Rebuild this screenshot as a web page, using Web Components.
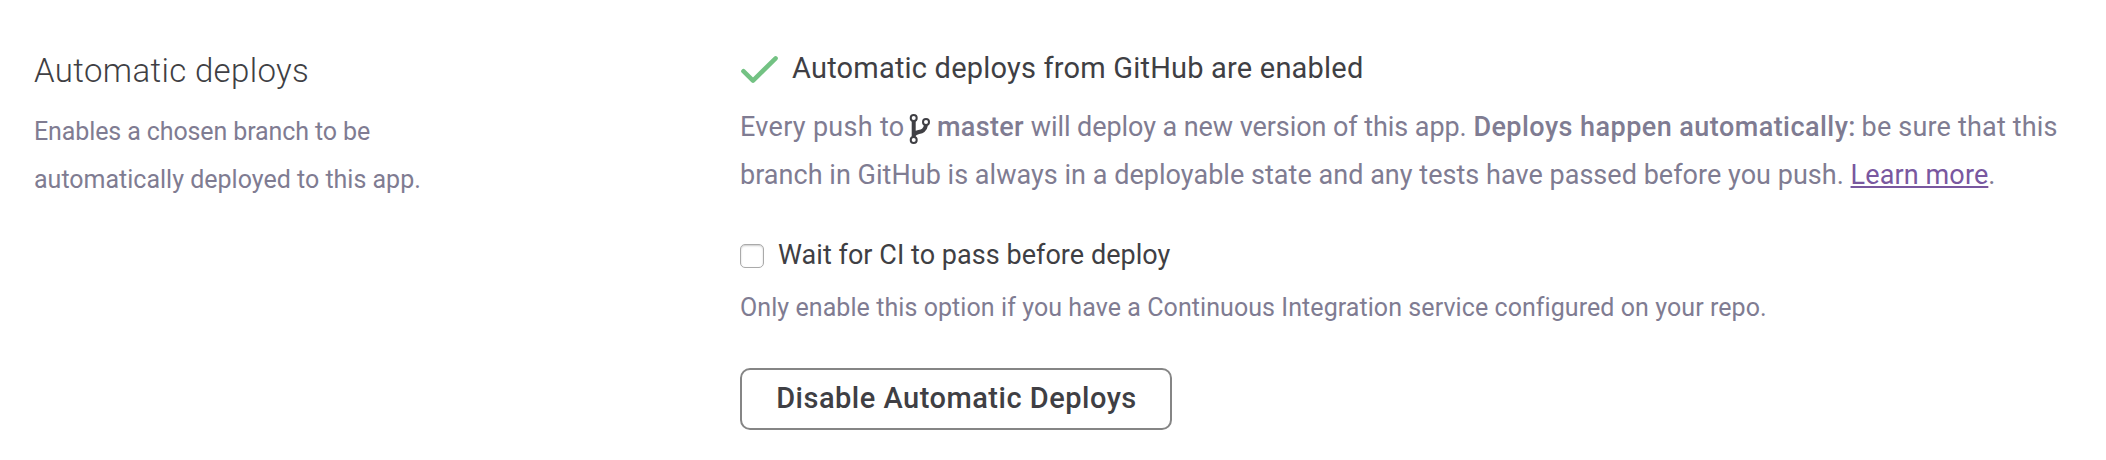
<!DOCTYPE html>
<html lang="en">
<head>
<meta charset="utf-8">
<title>Automatic deploys</title>
<style>
  body {
    margin: 0;
    background: #fff;
    color: #3f3f44;
    font-family: Roboto, "Liberation Sans", sans-serif;
  }
</style>
</head>
<body>
<deploy-section>
  <section-intro slot="intro" heading="Automatic deploys">Enables a chosen branch to be<br>automatically deployed to this app.</section-intro>
  <deploy-status heading="Automatic deploys from GitHub are enabled"></deploy-status>
  <ci-option label="Wait for CI to pass before deploy">Only enable this option if you have a Continuous Integration service configured on your repo.</ci-option>
  <outline-button>Disable Automatic Deploys</outline-button>
</deploy-section>

<script>
function define(name, html, setup) {
  const template = document.createElement('template');
  template.innerHTML = html;
  customElements.define(name, class extends HTMLElement {
    constructor() {
      super();
      this.attachShadow({ mode: 'open' });
      this.shadowRoot.appendChild(template.content.cloneNode(true));
      if (setup) setup(this, this.shadowRoot);
    }
  });
}

define('deploy-section', `
  <style>
    :host {
      display: grid;
      grid-template-columns: 706px 1fr;
      box-sizing: border-box;
      height: 460px;
      padding: 43px 34px 0;
    }
    main {
      display: flex;
      flex-direction: column;
      align-items: flex-start;
    }
  </style>
  <slot name="intro"></slot>
  <main><slot></slot></main>
`);

define('section-intro', `
  <style>
    :host { display: block; padding-top: 1px; }
    h2 {
      margin: 0;
      font-size: 33px;
      font-weight: 300;
      line-height: 54px;
      letter-spacing: 0.35px;
    }
    p {
      margin: 10px 0 0;
      color: #7f7c92;
      font-size: 25px;
      line-height: 48px;
      letter-spacing: 0;
    }
    p::first-line { letter-spacing: -0.11px; }
  </style>
  <h2></h2>
  <p><slot></slot></p>
`, (el, root) => {
  root.querySelector('h2').textContent = el.getAttribute('heading');
});

define('branch-icon', `
  <style>
    :host {
      display: inline-block;
      width: 21px;
      height: 30px;
      margin-left: -2px;
      vertical-align: -8px;
    }
    svg { display: block; }
  </style>
  <svg width="21" height="30" viewBox="0 0 21 30" fill="none" stroke="#3f3f44">
    <path d="M4.700 7v16M4.700 21.500c1.500-5.500 11-1 12.300-10.500" stroke-width="4"/>
    <circle cx="4.700" cy="4" r="3" fill="#fff" stroke-width="2"/>
    <circle cx="17" cy="8" r="3" fill="#fff" stroke-width="2"/>
    <circle cx="4.700" cy="26" r="3" fill="#fff" stroke-width="2"/>
  </svg>
`);

define('deploy-status', `
  <style>
    :host { display: block; }
    header { display: flex; align-items: center; gap: 14px; height: 50px; }
    header svg { margin-top: 2px; }
    h3 {
      margin: 0;
      font-size: 29px;
      font-weight: 400;
      letter-spacing: 0.2px;
    }
    p {
      margin: 10px 0 0;
      color: #7f7c92;
      font-size: 27px;
      line-height: 48px;
      white-space: nowrap;
    }
    b { font-weight: 500; letter-spacing: 0.35px; }
    a {
      color: #79589f;
      letter-spacing: 0.12px;
      text-decoration: underline;
      text-decoration-thickness: 2px;
      text-underline-offset: 2px;
    }
    .push { letter-spacing: 0.3px; }
    .result { letter-spacing: -0.07px; }
    .notice { letter-spacing: 0.45px; }
    .advice { margin-left: -1px; letter-spacing: 0.18px; }
    .tests { letter-spacing: 0.03px; }
  </style>
  <header>
    <svg width="38" height="28" viewBox="0 0 38 28" fill="none" stroke="#73c283" stroke-width="4.500" stroke-linecap="round" stroke-linejoin="round">
      <path d="M3.400 16.200l9.600 9.400L35.600 3.300"/>
    </svg>
    <h3></h3>
  </header>
  <p>
    <span class="push">Every push to</span> <branch-icon></branch-icon> <b>master</b> <span class="result">will deploy a new version of this app.</span> <b class="notice">Deploys happen automatically:</b> <span class="advice">be sure that this</span><br>
    <span class="tests">branch in GitHub is always in a deployable state and any tests have passed before you push.</span> <a href="#">Learn more</a>.
  </p>
`, (el, root) => {
  root.querySelector('h3').textContent = el.getAttribute('heading');
});

define('ci-option', `
  <style>
    :host { display: block; margin-top: 32px; }
    label {
      display: flex;
      align-items: center;
      gap: 14px;
      height: 48px;
      font-size: 27px;
      letter-spacing: 0.04px;
    }
    input {
      appearance: none;
      box-sizing: border-box;
      width: 24px;
      height: 24px;
      margin: 1px 0 0;
      border: 1px solid #aaa;
      border-radius: 5px;
      background: #fff;
      box-shadow: inset 0 1px 2px #ccc;
    }
    p {
      margin: 5px 0 0;
      color: #7f7c92;
      font-size: 25px;
      line-height: 48px;
      letter-spacing: 0.07px;
    }
  </style>
  <label><input type="checkbox"><span></span></label>
  <p><slot></slot></p>
`, (el, root) => {
  root.querySelector('span').textContent = el.getAttribute('label');
});

define('outline-button', `
  <style>
    :host { display: block; margin-top: 36px; }
    button {
      box-sizing: border-box;
      width: 432px;
      height: 62px;
      padding: 0 0 2px 1px;
      border: 2px solid #858585;
      border-radius: 10px;
      background: #fff;
      color: inherit;
      font: 500 29px Roboto, "Liberation Sans", sans-serif;
      letter-spacing: 0.5px;
    }
  </style>
  <button><slot></slot></button>
`);
</script>
</body>
</html>
